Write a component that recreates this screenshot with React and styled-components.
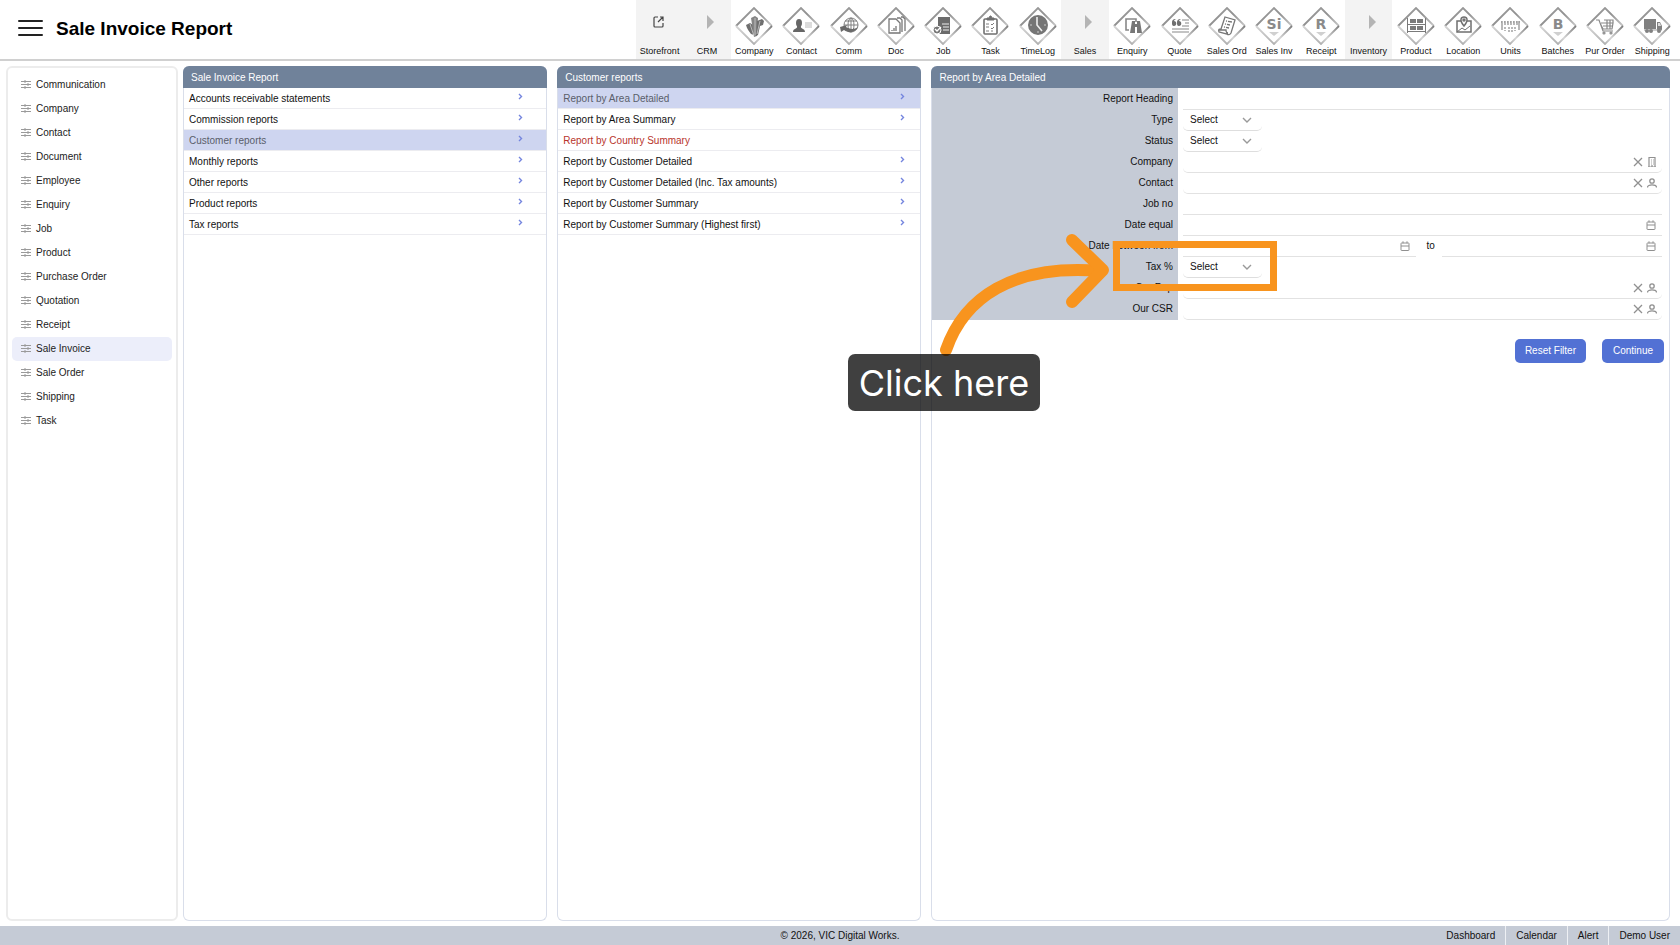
import React from 'react';
import styled, { createGlobalStyle } from 'styled-components';

const GlobalStyle = createGlobalStyle`
  * {
    box-sizing: border-box;
  }

  body {
    margin: 0;
    background: #fff;
    color: #111;
    font-family: "Liberation Sans", Arial, sans-serif;
    font-size: 10px;
    line-height: 12px;
  }

  a {
    color: inherit;
    text-decoration: none;
  }

  button, input, select {
    font: inherit;
    color: inherit;
  }

  svg {
    display: block;
    flex-shrink: 0;
  }
`;

const Page = styled.div`
  min-height: 100vh;
  display: flex;
  flex-direction: column;
  overflow-x: hidden;
`;

const Header = styled.header`
  display: flex;
  justify-content: space-between;
  border-bottom: 2px solid #d0d0d0;
  padding-right: 4px;
`;

const Brand = styled.div`
  display: flex;
  align-items: center;
  gap: 12px;
  padding: 0 0 1px 18px;

  h1 {
    margin: 0;
    color: #000;
    font-size: 19px;
    line-height: 24px;
    font-weight: bold;
    white-space: nowrap;
  }
`;

const MenuButton = styled.button`
  border: 0;
  padding: 0;
  background: none;
  cursor: pointer;
`;

const Toolbar = styled.nav`
  display: flex;
  width: 1040px;
  height: 59px;
`;

const ToolLink = styled.a`
  flex: 1 1 0;
  min-width: 0;
  display: flex;
  flex-direction: column;
  align-items: center;
  padding-top: 7px;
  background: ${({ $group }) => ($group ? '#f3f3f3' : 'transparent')};
  font-size: 9px;
  line-height: 12px;
  white-space: nowrap;
`;

const Main = styled.main`
  flex: 1;
  display: grid;
  grid-template-columns: 172px 1fr;
  gap: 5px;
  padding: 5px 10px 5px 6px;
`;

const Sidebar = styled.nav`
  border: 2px solid #ececec;
  border-radius: 6px;
  padding: 5px 4px;
`;

const SideLink = styled.a`
  display: flex;
  align-items: center;
  gap: 5px;
  height: 24px;
  padding: 0 9px;
  border-radius: 5px;
  background: ${({ $active }) => ($active ? '#eceefa' : 'transparent')};
  color: #222;
`;

const Panels = styled.div`
  display: grid;
  grid-template-columns: 364fr 364fr 738fr;
  gap: 10px;
`;

const Panel = styled.section`
  min-width: 0;
  border: 1px solid #d9deea;
  border-top: 0;
  border-radius: 6px;
`;

const PanelTitle = styled.h2`
  margin: 0 -1px;
  height: 22px;
  padding: 0 8px;
  border-radius: 6px 6px 0 0;
  background: #70829a;
  color: #fff;
  font-size: 10px;
  line-height: 23px;
  font-weight: normal;
`;

const ReportLink = styled.a`
  display: flex;
  align-items: flex-start;
  justify-content: space-between;
  height: 21px;
  padding: 5px ${({ $inset }) => $inset}px 0 5px;
  border-bottom: 1px solid #ececf0;
  background: ${({ $active }) => ($active ? '#ced5f0' : 'transparent')};
  color: ${({ $active, $alert }) => ($alert && '#b8352c') || ($active && '#5a5e6a') || '#111'};
`;

const Row = styled.div`
  display: grid;
  grid-template-columns: 1fr 2fr;
  height: 21px;
`;

const Label = styled.label`
  padding-right: 5px;
  background: #c5cbd6;
  line-height: 22px;
  text-align: right;
`;

const FieldCell = styled.div`
  position: relative;
  display: flex;
  padding: 0 7px 0 5px;
`;

const InputBox = styled.div`
  flex: ${({ $grow = 1 }) => $grow} 1 0;
  display: flex;
  align-items: center;
  gap: 4px;
  padding-right: ${({ $rounded }) => ($rounded ? '5px' : '6px')};
  border-bottom: 1px solid #e2e2e2;
  border-radius: ${({ $rounded }) => ($rounded ? '0 0 5px 5px' : '0')};

  input {
    flex: 1;
    min-width: 0;
    height: 20px;
    padding: 0 7px;
    border: 0;
    outline: 0;
    background: transparent;
  }
`;

const IconButton = styled.button`
  padding: 0;
  border: 0;
  background: none;
  color: #909090;
  cursor: pointer;
`;

const ToLabel = styled.label`
  padding: 0 7px 0 11px;
  line-height: 22px;
`;

const SelectBox = styled.div`
  width: 79px;
  display: grid;
  align-items: center;
  border-bottom: 1px solid #dedede;
  border-radius: 5px;

  select, svg {
    grid-area: 1 / 1;
  }

  select {
    width: 100%;
    height: 20px;
    padding: 0 7px;
    border: 0;
    outline: 0;
    appearance: none;
    background: transparent;
  }

  svg {
    justify-self: end;
    margin-right: 10px;
    pointer-events: none;
  }
`;

const Actions = styled.div`
  display: flex;
  justify-content: flex-end;
  gap: 16px;
  padding: 20px 5px;
`;

const ActionButton = styled.button`
  height: 24px;
  padding: 0 10px;
  min-width: 62px;
  border: 0;
  border-radius: 5px;
  background: #5271d4;
  color: #fff;
  cursor: pointer;
`;

const Footer = styled.footer`
  display: grid;
  grid-template-columns: 1fr auto 1fr;
  height: 19px;
  background: #c5cbd6;
  line-height: 20px;
`;

const FooterLinks = styled.nav`
  display: flex;
  justify-content: flex-end;

  a {
    padding: 0 10px;
  }

  a + a {
    border-left: 1px solid #eef0f4;
  }
`;

// The tour hint hangs on the field it points at and lies over the panels.
const Hint = styled.div`
  position: absolute;
  z-index: 2;
  top: -15px;
  left: -65px;
  width: 164px;
  height: 50px;
  border: 7px solid #f8941e;
  pointer-events: none;
`;

const HintArrow = styled.svg`
  position: absolute;
  top: -18px;
  left: -184px;
`;

const HintText = styled.div`
  position: absolute;
  top: 106px;
  left: -272px;
  width: 192px;
  height: 57px;
  border-radius: 7px;
  background: rgba(0, 0, 0, 0.75);
  color: #fff;
  font-family: Inter, sans-serif;
  font-size: 36px;
  line-height: 58px;
  text-align: center;
  white-space: nowrap;
`;

const glyphs = {
  Company: (
    <g fill="#6f6f6f">
      <path d="M11 18l4-2 3 2 1 10-3-1c-2-3-4-5-5-9z" />
      <path d="M16 11l4-2 3 2-1 18-3 1z" fill="#858585" />
      <path d="M22 14l5-2 2 2-1 4-3 1-2 9-2 1z" />
      <path d="M15 17l4 12M20 11v17M25 14l-3 13" stroke="#d8d8d8" strokeWidth=".7" />
    </g>
  ),
  Contact: (
    <g fill="#666">
      <ellipse cx="17" cy="16" rx="3" ry="4" />
      <path d="M11 25c0-4 5-3 4-6h4c-1 3 4 2 4 6z" />
      <path d="M23 16h7M23 18h7M23 20h7" stroke="#b8b8b8" />
    </g>
  ),
  Comm: (
    <g fill="none" stroke="#808080">
      <circle cx="21" cy="18" r="7" />
      <ellipse cx="21" cy="18" rx="3" ry="7" />
      <path d="M14 18h14M15 14h12M21 11v14" />
      <path d="M10 20l7-2-1 2c3 2 8 3 12 0-2 5-9 7-14 3l-3 2z" fill="#6a6a6a" stroke="none" />
    </g>
  ),
  Doc: (
    <g fill="none" stroke="#777" strokeWidth="1.3">
      <path d="M12 12h7l4 4v10H12zM20 11h3l2 2v12M24 10h2l2 2v12" />
      <path d="M15 24v-1M17 24v-3M19 24v-5" />
    </g>
  ),
  Job: (
    <g>
      <path d="M14 10h12v17H14z" fill="#6b6b6b" />
      <path d="M18 17h7M19 20h6M19 23h6" stroke="#eee" />
      <circle cx="13" cy="23" r="4" fill="#777" stroke="#fff" />
      <path d="M11 22l2 2 4-4" fill="none" stroke="#fff" strokeWidth="1.3" />
    </g>
  ),
  Task: (
    <g fill="none" stroke="#6f6f6f">
      <rect x="13" y="12" width="13" height="15" rx="1" strokeWidth="1.6" />
      <path d="M16 13v-2h2l1-2h1l1 2h2v2z" fill="#6f6f6f" />
      <path d="M15 17h3M20 17l1 1 2-2M15 20h3M20 21l1 1 2-2M15 24h3M20 24h2" strokeWidth=".9" />
    </g>
  ),
  TimeLog: (
    <g>
      <circle cx="19" cy="18" r="10" fill="#757575" />
      <path d="M18 10v8l5 6" fill="none" stroke="#eee" strokeWidth="1.6" />
      <path d="M11 18h2M25 18h2M19 26v-2" stroke="#ccc" />
    </g>
  ),
  Enquiry: (
    <g fill="#777">
      <path d="M16 23h-3V12h10v3" fill="none" stroke="#888" strokeWidth="1.6" />
      <path d="M19 14h3v3h2v-3h3l2 12h-5v-6h-2v6h-5z" />
    </g>
  ),
  Quote: (
    <g fill="#6f6f6f">
      <path d="M11 16c0-3 1-4 4-4-2 1-2 2-2 2 3 0 3 5 0 5-2 0-2-2-2-3zM16 16c0-3 1-4 4-4-2 1-2 2-2 2 3 0 3 5 0 5-2 0-2-2-2-3z" />
      <path d="M21 13h7M24 16h4M21 19h7M11 22h17M11 25h17" stroke="#b0b0b0" strokeWidth="1.6" />
    </g>
  ),
  'Sales Ord': (
    <g fill="none" stroke="#777" strokeWidth="1.3">
      <path d="M17 10l10 3-4 13c-1 2-3 2-4 1l-8-2c-1-3 0-3 2-3zM11 23h7c0 2 1 3 2 3" />
      <path d="M18 14l6 1M17 17l5 1M16 20l5 1" strokeDasharray="1 1 4" />
    </g>
  ),
  Product: (
    <g fill="#7a7a7a">
      <path d="M10 11h1v15h-1zM28 11h1v15h-1zM11 17h17v1H11zM11 24h17v1H11z" />
      <path d="M13 12h6v4h-6zM20 12h6v4h-6zM13 19h6v4h-6zM20 19h6v4h-6z" />
    </g>
  ),
  Location: (
    <g fill="none" stroke="#6f6f6f" strokeWidth="1.5">
      <path d="M17 14h-4v11h14V14h-4" />
      <path d="M13 25l5-4 3 2 5-4" strokeWidth="1" />
      <path d="M20 19c-5-6-3-9 0-9s5 3 0 9z" />
      <circle cx="20" cy="13" r="1" />
    </g>
  ),
  Units: (
    <g stroke="#8a8a8a" strokeWidth="1.2" fill="none">
      <path d="M10 15h19" strokeDasharray="1 2" />
      <path d="M11 14v9M14 14v4M17 14v4M20 14v4M23 14v4M26 14v4M28 14v9" />
      <path d="M14 20v4M18 20v6M21 20v6M24 20v4" strokeDasharray="2 1" />
    </g>
  ),
  'Pur Order': (
    <g fill="none" stroke="#888" strokeWidth="1.2">
      <path d="M10 13h3l4 11h10M14 16l3 6h9l1-6H15M17 19h10M18 13h9v3M21 13v9M24 13v9" />
      <circle cx="18" cy="26" r="1" />
      <circle cx="25" cy="26" r="1" />
    </g>
  ),
  Shipping: (
    <g fill="#808080">
      <path d="M11 12h12v10H11zM24 15h3l2 4v4h-5z" />
      <path d="M25 16h2l1 3h-3z" fill="#ddd" />
      <path d="M11 23h18" stroke="#999" />
      <circle cx="14" cy="24" r="2" />
      <circle cx="18" cy="24" r="2" />
      <circle cx="26" cy="24" r="2" />
    </g>
  ),
};

const letters = { 'Sales Inv': 'Si', Receipt: 'R', Batches: 'B' };

const DiamondIcon = ({ name }) => (
  <svg width="38" height="38" viewBox="0 0 38 38" aria-hidden="true">
    <defs>
      <linearGradient id="edge-up" x1="0" y1="1" x2="1" y2="0">
        <stop offset="0" stopColor="#8a8a8a" />
        <stop offset="0.5" stopColor="#d6d6d6" />
        <stop offset="1" stopColor="#7c7c7c" />
      </linearGradient>
      <linearGradient id="edge-down" x1="0" y1="0" x2="1" y2="1">
        <stop offset="0" stopColor="#a0a0a0" />
        <stop offset="0.5" stopColor="#909090" />
        <stop offset="1" stopColor="#c8c8c8" />
      </linearGradient>
    </defs>
    <g fill="none" strokeWidth="1.8">
      <path d="M1 19L19 1L37 19" stroke="url(#edge-down)" />
      <path d="M1 19L19 37L37 19" stroke="url(#edge-up)" />
    </g>
    {letters[name] ? (
      <>
        <text x="19" y="22" textAnchor="middle" fontFamily="DejaVu Sans, sans-serif" fontSize="14" fontWeight="bold" fill="#8a8a8a">
          {letters[name]}
        </text>
        <path d="M14 25h10l-5 4z" fill="#d0d0d0" />
      </>
    ) : glyphs[name]}
  </svg>
);

const OpenIcon = () => (
  <svg width="38" height="38" viewBox="0 0 38 38" fill="none" stroke="#444" strokeWidth="1.2" aria-hidden="true">
    <path d="M17 10h-3q-1 0-1 1v8q0 1 1 1h7q1 0 1-1v-3M19 10h3v4M22 10l-5 5" />
  </svg>
);

const GroupIcon = () => (
  <svg width="38" height="38" viewBox="0 0 38 38" aria-hidden="true">
    <path d="M19 8l7 7-7 7z" fill="#b4b4b4" />
  </svg>
);

const SlidersIcon = () => (
  <svg width="10" height="10" viewBox="0 0 10 10" stroke="#9a9a9a" aria-hidden="true">
    <path d="M0 1.500h10M0 4.500h10M0 7.500h10" />
    <path d="M4 0v3M7 3v3M4 6v3" />
  </svg>
);

const RightIcon = () => (
  <svg width="5" height="8" viewBox="0 0 5 8" fill="none" stroke="#7485de" strokeWidth="1.4" aria-hidden="true">
    <path d="M1 1l2.500 2.500L1 6" />
  </svg>
);

const fieldIcons = {
  clear: <path d="M1 1l8 8M9 1l-8 8" strokeWidth="1.3" />,
  company: <path d="M2 .5h6v9.500h-6zM1 10h8M4 3h.8M6 3h.8M4 5h.8M6 5h.8M4 7h.8M6 7h.8M5 8v2" strokeWidth="1.2" />,
  person: <path d="M5 .8a2 2 0 1 1 0 4.400a2 2 0 1 1 0-4.400zM.5 9.500c0-3.500 9-3.500 9 0" strokeWidth="1.3" />,
  calendar: <path d="M1.500 2h7q.5 0 .5.5v6.500q0 .5-.5.5h-7q-.5 0-.5-.5v-6.500q0-.5.5-.5zM1 5h8M3 .3v2M7 .3v2" />,
};

const FieldIcon = ({ name, label }) => (
  <IconButton type="button" aria-label={label}>
    <svg width="10" height="10" viewBox="0 0 10 10" fill="none" stroke="currentColor">
      {fieldIcons[name]}
    </svg>
  </IconButton>
);

const tools = [
  'Storefront', 'CRM', 'Company', 'Contact', 'Comm', 'Doc', 'Job', 'Task', 'TimeLog', 'Sales', 'Enquiry',
  'Quote', 'Sales Ord', 'Sales Inv', 'Receipt', 'Inventory', 'Product', 'Location', 'Units', 'Batches',
  'Pur Order', 'Shipping',
];

const groups = ['Storefront', 'CRM', 'Sales', 'Inventory'];

const sections = [
  'Communication', 'Company', 'Contact', 'Document', 'Employee', 'Enquiry', 'Job', 'Product',
  'Purchase Order', 'Quotation', 'Receipt', 'Sale Invoice', 'Sale Order', 'Shipping', 'Task',
];

const categories = [
  { name: 'Accounts receivable statements' },
  { name: 'Commission reports' },
  { name: 'Customer reports', active: true },
  { name: 'Monthly reports' },
  { name: 'Other reports' },
  { name: 'Product reports' },
  { name: 'Tax reports' },
];

const reports = [
  { name: 'Report by Area Detailed', active: true },
  { name: 'Report by Area Summary' },
  { name: 'Report by Country Summary', alert: true },
  { name: 'Report by Customer Detailed' },
  { name: 'Report by Customer Detailed (Inc. Tax amounts)' },
  { name: 'Report by Customer Summary' },
  { name: 'Report by Customer Summary (Highest first)' },
];

const fields = [
  { id: 'heading', label: 'Report Heading', type: 'text' },
  { id: 'type', label: 'Type', type: 'select' },
  { id: 'status', label: 'Status', type: 'select' },
  { id: 'company', label: 'Company', type: 'lookup', icon: 'company' },
  { id: 'contact', label: 'Contact', type: 'lookup', icon: 'person' },
  { id: 'job', label: 'Job no', type: 'text' },
  { id: 'date', label: 'Date equal', type: 'date' },
  { id: 'from', label: 'Date between from', type: 'range' },
  { id: 'tax', label: 'Tax %', type: 'select', hint: 'Click here' },
  { id: 'rep', label: 'Our Rep', type: 'lookup', icon: 'person' },
  { id: 'csr', label: 'Our CSR', type: 'lookup', icon: 'person' },
];

const ReportList = ({ title, items, inset }) => (
  <Panel>
    <PanelTitle>{title}</PanelTitle>
    {items.map(({ name, active, alert }) => (
      <ReportLink key={name} href="#" $active={active} $alert={alert} $inset={inset}>
        {name}
        {!alert && <RightIcon />}
      </ReportLink>
    ))}
  </Panel>
);

const DateInput = ({ id, grow }) => (
  <InputBox $grow={grow}>
    <input id={id} type="text" />
    <FieldIcon name="calendar" label="Pick a date" />
  </InputBox>
);

const Control = ({ id, type, icon }) => {
  if (type === 'select') {
    return (
      <SelectBox>
        <select id={id} defaultValue="">
          <option value="">Select</option>
        </select>
        <svg width="10" height="6" viewBox="0 0 10 6" fill="none" stroke="#999" strokeWidth="1.4">
          <path d="M1 1l4 4 4-4" />
        </svg>
      </SelectBox>
    );
  }

  if (type === 'lookup') {
    return (
      <InputBox $rounded>
        <input id={id} type="text" />
        <FieldIcon name="clear" label="Clear" />
        <FieldIcon name={icon} label="Look up" />
      </InputBox>
    );
  }

  if (type === 'date') {
    return <DateInput id={id} />;
  }

  if (type === 'range') {
    return (
      <>
        <DateInput id={id} grow={235} />
        <ToLabel htmlFor="to">to</ToLabel>
        <DateInput id="to" grow={222} />
      </>
    );
  }

  return <InputBox><input id={id} type="text" /></InputBox>;
};

const App = () => (
  <Page>
    <GlobalStyle />
    <Header>
      <Brand>
        <MenuButton type="button" aria-label="Menu">
          <svg width="26" height="20" viewBox="0 0 26 20" stroke="#222" strokeWidth="2" strokeLinecap="round">
            <path d="M1 2h23M1 9h23M1 16h23" />
          </svg>
        </MenuButton>
        <h1>Sale Invoice Report</h1>
      </Brand>
      <Toolbar>
        {tools.map((name) => (
          <ToolLink key={name} href="#" $group={groups.includes(name)}>
            {name === 'Storefront' && <OpenIcon />}
            {name !== 'Storefront' && groups.includes(name) && <GroupIcon />}
            {!groups.includes(name) && <DiamondIcon name={name} />}
            {name}
          </ToolLink>
        ))}
      </Toolbar>
    </Header>
    <Main>
      <Sidebar>
        {sections.map((name) => (
          <SideLink key={name} href="#" $active={name === 'Sale Invoice'}>
            <SlidersIcon />
            {name}
          </SideLink>
        ))}
      </Sidebar>
      <Panels>
        <ReportList title="Sale Invoice Report" items={categories} inset={23} />
        <ReportList title="Customer reports" items={reports} inset={15} />
        <Panel>
          <PanelTitle>Report by Area Detailed</PanelTitle>
          <form>
            {fields.map(({ id, label, type, icon, hint }) => (
              <Row key={id}>
                <Label htmlFor={id}>{label}</Label>
                <FieldCell>
                  <Control id={id} type={type} icon={icon} />
                  {hint &&
                    <Hint>
                      <HintArrow width="174" height="130" viewBox="0 0 174 130" fill="none" stroke="#f8941e" strokeWidth="12" strokeLinecap="round" strokeLinejoin="round">
                        <path d="M10 120C28 68 76 34 164 41" />
                        <path d="M136 10L167 40L136 72" />
                      </HintArrow>
                      <HintText>{hint}</HintText>
                    </Hint>
                  }
                </FieldCell>
              </Row>
            ))}
            <Actions>
              <ActionButton type="reset">Reset Filter</ActionButton>
              <ActionButton type="button">Continue</ActionButton>
            </Actions>
          </form>
        </Panel>
      </Panels>
    </Main>
    <Footer>
      <span />
      <span>© 2026, VIC Digital Works.</span>
      <FooterLinks>
        <a href="#">Dashboard</a>
        <a href="#">Calendar</a>
        <a href="#">Alert</a>
        <a href="#">Demo User</a>
      </FooterLinks>
    </Footer>
  </Page>
);

export default App;
